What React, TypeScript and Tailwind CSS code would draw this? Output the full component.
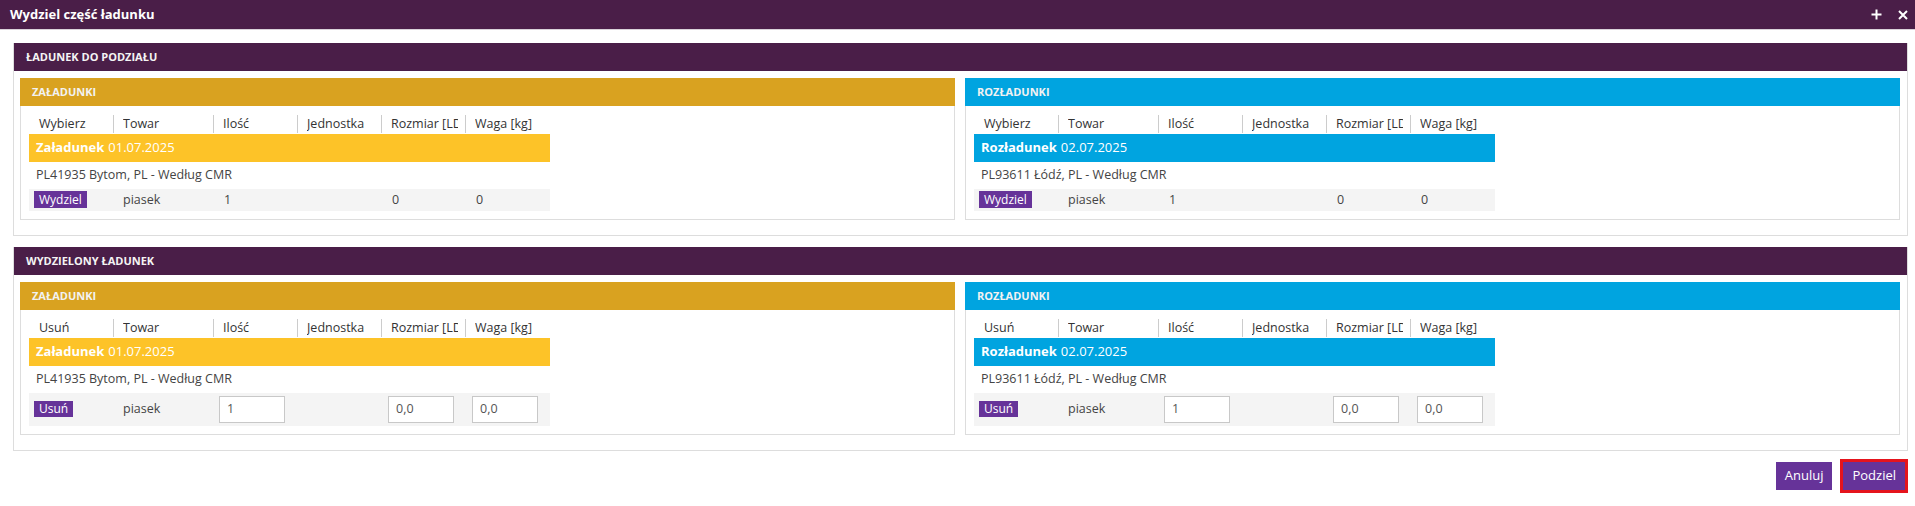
const cols = 'grid grid-cols-[84px_100px_84px_84px_84px_85px] w-[521px]';

const headers = ['Towar', 'Ilość', 'Jednostka', 'Rozmiar [LDM]', 'Waga [kg]'];

type Side = {
  title: string;
  head: string;
  strip: string;
  label: string;
  date: string;
  place: string;
};

const sides: Side[] = [
  {
    title: 'Załadunki',
    head: 'bg-[#d9a220]',
    strip: 'bg-[#fdc328]',
    label: 'Załadunek',
    date: '01.07.2025',
    place: 'PL41935 Bytom, PL - Według CMR',
  },
  {
    title: 'Rozładunki',
    head: 'bg-[#00a4e0]',
    strip: 'bg-[#00a4e0]',
    label: 'Rozładunek',
    date: '02.07.2025',
    place: 'PL93611 Łódź, PL - Według CMR',
  },
];

function Field({ value }: { value: string }) {
  return (
    <div className="flex h-[27px] w-[66px] items-center border border-[#c8c8c8] bg-white pl-[7px] text-[12.5px] text-[#555]">
      {value}
    </div>
  );
}

function Panel({ side, editable }: { side: Side; editable: boolean }) {
  return (
    <div>
      <div className={`flex h-[28px] items-center px-[12px] text-[11px] font-bold uppercase text-[#f2f2f2] ${side.head}`}>
        {side.title}
      </div>
      <div className="border-x border-b border-[#dddddd] px-[8px] pb-[8px] pt-[9px]">
        <div className={`${cols} h-[19px] text-[12.5px] leading-[18px] text-[#333]`}>
          <div className="pl-[10px]">{editable ? 'Usuń' : 'Wybierz'}</div>
          {headers.map((h) => (
            <div key={h} className="mb-[1px] border-l border-[#cccccc] pl-[9px] pr-[7px]">
              <div className="overflow-hidden whitespace-nowrap">{h}</div>
            </div>
          ))}
        </div>
        <div className={`flex h-[28px] w-[521px] items-center px-[7px] text-[13px] text-white ${side.strip}`}>
          <span className="font-bold">{side.label}</span>
          <span className="ml-[4px]">{side.date}</span>
        </div>
        <div className="flex h-[27px] items-center px-[7px] text-[12.5px] text-[#444]">{side.place}</div>
        {editable ? (
          <div className={`${cols} h-[33px] items-center bg-[#f4f4f4] text-[12.5px] text-[#444]`}>
            <div className="pl-[5px]">
              <span className="inline-flex h-[16px] items-center bg-[#663399] px-[5px] text-[12px] text-white">Usuń</span>
            </div>
            <div className="pl-[10px]">piasek</div>
            <div className="pl-[6px]">
              <Field value="1" />
            </div>
            <div />
            <div className="pl-[7px]">
              <Field value="0,0" />
            </div>
            <div className="pl-[7px]">
              <Field value="0,0" />
            </div>
          </div>
        ) : (
          <div className={`${cols} h-[22px] items-center bg-[#f4f4f4] text-[12.5px] text-[#444]`}>
            <div className="pl-[5px]">
              <span className="inline-flex h-[17px] items-center bg-[#663399] px-[5px] text-[12px] text-white">Wydziel</span>
            </div>
            <div className="pl-[10px]">piasek</div>
            <div className="pl-[11px]">1</div>
            <div />
            <div className="pl-[11px]">0</div>
            <div className="pl-[11px]">0</div>
          </div>
        )}
      </div>
    </div>
  );
}

function Section({ title, editable, className }: { title: string; editable: boolean; className: string }) {
  return (
    <section className={`border-x border-b border-[#dddddd] ${className}`}>
      <div className="flex h-[28px] items-center bg-[#4a1e48] px-[12px] text-[11px] font-bold uppercase text-[#f4f4f4]">
        {title}
      </div>
      <div className="grid grid-cols-2 gap-[10px] pb-[15px] pl-[6px] pr-[7px] pt-[7px]">
        {sides.map((s) => (
          <Panel key={s.title} side={s} editable={editable} />
        ))}
      </div>
    </section>
  );
}

export default function App() {
  return (
    <div className="h-[506px] w-[1915px] bg-white font-['Open_Sans',sans-serif] text-[#333]">
      <div className="flex h-[30px] items-center justify-between border-b border-[#d9d2d9] bg-[#4a1e48] pl-[10px] pr-[7px]">
        <span className="text-[13px] font-bold text-white">Wydziel część ładunku</span>
        <div className="flex items-center gap-[16px] text-white">
          <svg width="11" height="11" viewBox="0 0 11 11">
            <path d="M5.5 0.5v10M0.5 5.5h10" stroke="currentColor" strokeWidth="2" />
          </svg>
          <svg width="10" height="10" viewBox="0 0 10 10">
            <path d="M1 1l8 8M9 1l-8 8" stroke="currentColor" strokeWidth="2" />
          </svg>
        </div>
      </div>

      <div className="pl-[13px] pr-[7px]">
        <Section title="Ładunek do podziału" editable={false} className="mt-[13px]" />
        <Section title="Wydzielony ładunek" editable className="mt-[11px]" />

        <div className="mt-[11px] flex justify-end gap-[11px] pr-[3px]">
          <button className="h-[28px] bg-[#663399] px-[9px] text-[13px] text-white">Anuluj</button>
          <button className="h-[28px] bg-[#663399] px-[9px] text-[13px] text-white outline-3 outline-offset-0 outline-[#e5141d]">
            Podziel
          </button>
        </div>
      </div>
    </div>
  );
}
